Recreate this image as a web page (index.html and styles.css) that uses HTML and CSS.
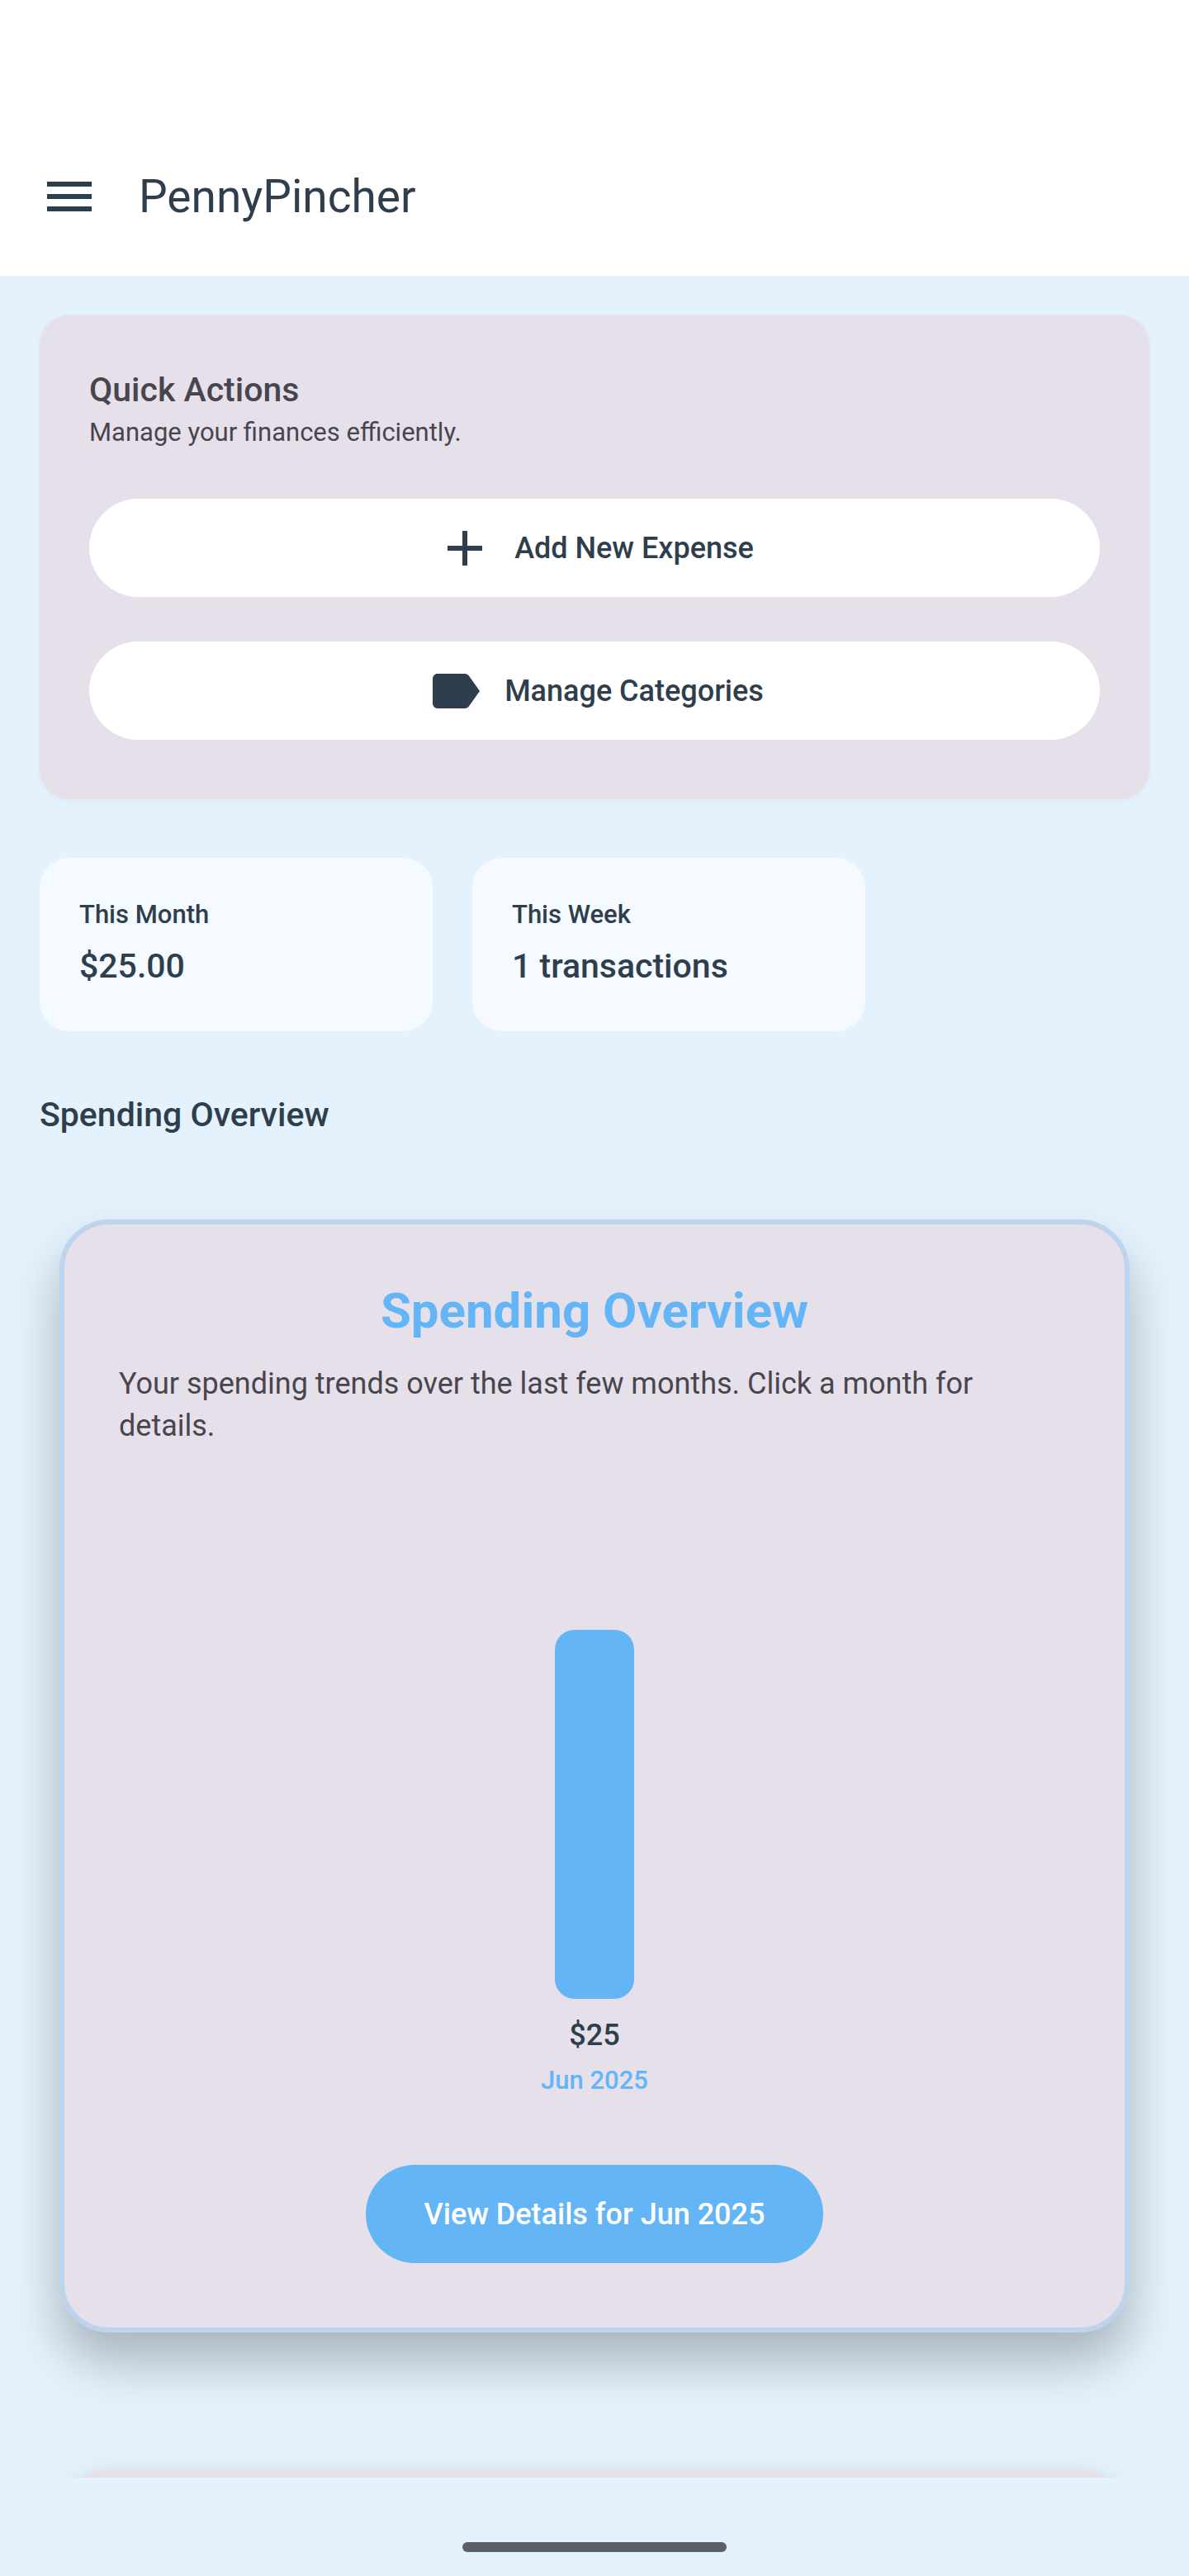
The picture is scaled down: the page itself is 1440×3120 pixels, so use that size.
FILE: index.html
```html
<!DOCTYPE html>
<html lang="en">
<head>
<meta charset="UTF-8">
<meta name="viewport" content="width=device-width, initial-scale=1.0">
<title>PennyPincher</title>
<link rel="stylesheet" href="styles.css">
</head>
<body>
<header class="app-bar">
    <button class="menu-button" type="button" aria-label="Open menu">
        <svg class="icon" viewBox="0 0 24 24"><path d="M3 18h18v-2H3v2zm0-5h18v-2H3v2zm0-7v2h18V6H3z"/></svg>
    </button>
    <h1 class="app-title">PennyPincher</h1>
</header>

<main class="content">
    <section class="quick-actions">
        <h2 class="title">Quick Actions</h2>
        <p class="subtitle">Manage your finances efficiently.</p>
        <div class="action-list">
            <button class="button button-light" type="button">
                <svg class="icon" viewBox="0 0 24 24"><path d="M19 13h-6v6h-2v-6H5v-2h6V5h2v6h6v2z"/></svg>
                <span>Add New Expense</span>
            </button>
            <button class="button button-light" type="button">
                <svg class="icon" viewBox="0 0 24 24"><path d="M17.63 5.84C17.27 5.33 16.67 5 16 5L5 5.01C3.9 5.01 3 5.9 3 7v10c0 1.1.9 1.99 2 1.99L16 19c.67 0 1.27-.33 1.63-.84L22 12l-4.37-6.16z"/></svg>
                <span>Manage Categories</span>
            </button>
        </div>
    </section>

    <section class="stats">
        <div class="stat">
            <p class="stat-label">This Month</p>
            <p class="title">$25.00</p>
        </div>
        <div class="stat">
            <p class="stat-label">This Week</p>
            <p class="title">1 transactions</p>
        </div>
    </section>

    <h2 class="title section-title">Spending Overview</h2>

    <section class="overview">
        <h3 class="overview-title">Spending Overview</h3>
        <p class="overview-text">Your spending trends over the last few months. Click a month for details.</p>
        <div class="chart">
            <div class="month">
                <div class="plot">
                    <div class="bar" style="height: 75%"></div>
                </div>
                <p class="amount">$25</p>
                <p class="month-name">Jun 2025</p>
            </div>
        </div>
        <button class="button button-primary" type="button">View Details for Jun 2025</button>
    </section>

    <!-- Next card, cut off by the scroll area -->
    <section class="next-card"></section>
</main>

<footer class="nav-bar">
    <div class="home-handle"></div>
</footer>
</body>
</html>
```

FILE: styles.css
```css
* {
    box-sizing: border-box;
}

body {
    display: flex;
    flex-direction: column;
    height: 100vh;
    margin: 0;
    background-color: #e3f2fd;
    color: #2f3e4c;
    font-family: Roboto, sans-serif;
}

h1, h2, h3, p {
    margin: 0;
}

button {
    border: none;
    font-family: inherit;
    color: inherit;
    cursor: pointer;
}

.icon {
    width: 72px;
    height: 72px;
    fill: currentColor;
}

/*------------------ App bar ------------------*/
.app-bar {
    display: flex;
    align-items: center;
    gap: 12px;
    padding: 142px 12px 0;
    background-color: #fff;
}

.menu-button {
    display: flex;
    align-items: center;
    justify-content: center;
    width: 144px;
    height: 192px;
    padding: 0;
    background: none;
}

.app-title {
    font-size: 55px;
    font-weight: 400;
    line-height: 72px;
}

/*------------------ Content ------------------*/
.content {
    flex: 1;
    min-height: 0;
    padding: 48px 48px 0;
    overflow-y: auto;
    scrollbar-width: none;
}

.title {
    font-size: 41px;
    font-weight: 500;
    line-height: 61px;
}

.quick-actions {
    padding: 60px 60px 72px;
    border-radius: 36px;
    background-color: #e6e0ea;
    color: #49454f;
    box-shadow: 0 1px 4px rgba(230, 224, 234, .9);
}

.subtitle {
    font-size: 31px;
    line-height: 41px;
}

.action-list {
    display: flex;
    flex-direction: column;
    gap: 54px;
    margin-top: 60px;
}

.button {
    display: flex;
    align-items: center;
    justify-content: center;
    gap: 24px;
    height: 119px;
    padding: 0 70px;
    border-radius: 60px;
    font-size: 36px;
    font-weight: 500;
}

.button-light {
    background-color: #fff;
    color: #2f3e4c;
}

.button-primary {
    background-color: #64b5f6;
    color: #fff;
}

/*------------------ Stats ------------------*/
.stats {
    display: flex;
    gap: 48px;
    margin-top: 71px;
}

.stat {
    display: flex;
    flex-direction: column;
    gap: 12px;
    width: calc((100vw - 12px) / 3);
    padding: 48px;
    border-radius: 36px;
    background-color: #f4faff;
}

.stat-label {
    font-size: 31px;
    font-weight: 500;
    line-height: 41px;
}

.section-title {
    margin-top: 71px;
}

/*------------------ Spending overview ------------------*/
.overview {
    display: flex;
    flex-direction: column;
    align-items: center;
    margin: 96px 24px 0;
    padding: 66px 66px 78px;
    border: 6px solid #bdd4ee;
    border-radius: 60px;
    background-color: #e6e0ea;
    box-shadow: 0 36px 60px rgba(0, 0, 0, .25);
}

.overview-title {
    color: #64b5f6;
    font-size: 60px;
    font-weight: 700;
    line-height: 78px;
}

.overview-text {
    align-self: stretch;
    margin-top: 24px;
    color: #49454f;
    font-size: 36px;
    line-height: 51px;
}

.chart {
    display: flex;
    justify-content: center;
    margin: 72px 0 82px;
}

.month {
    display: flex;
    flex-direction: column;
    align-items: center;
}

.plot {
    display: flex;
    align-items: flex-end;
    height: 596px;
}

.bar {
    width: 96px;
    border-radius: 24px;
    background-color: #64b5f6;
}

.amount {
    margin-top: 19px;
    font-size: 36px;
    font-weight: 500;
    line-height: 51px;
}

.month-name {
    margin-top: 8px;
    color: #64b5f6;
    font-size: 31px;
    font-weight: 500;
    line-height: 41px;
}

.next-card {
    height: 600px;
    margin: 166px 24px 0;
    border-radius: 60px;
    background-color: #e6e0ea;
    box-shadow: 0 12px 36px rgba(0, 0, 0, .15);
}

/*------------------ Navigation bar ------------------*/
.nav-bar {
    display: flex;
    justify-content: center;
    height: 119px;
    padding-top: 78px;
}

.home-handle {
    width: 320px;
    height: 12px;
    border-radius: 6px;
    background-color: #5b6068;
}
```
